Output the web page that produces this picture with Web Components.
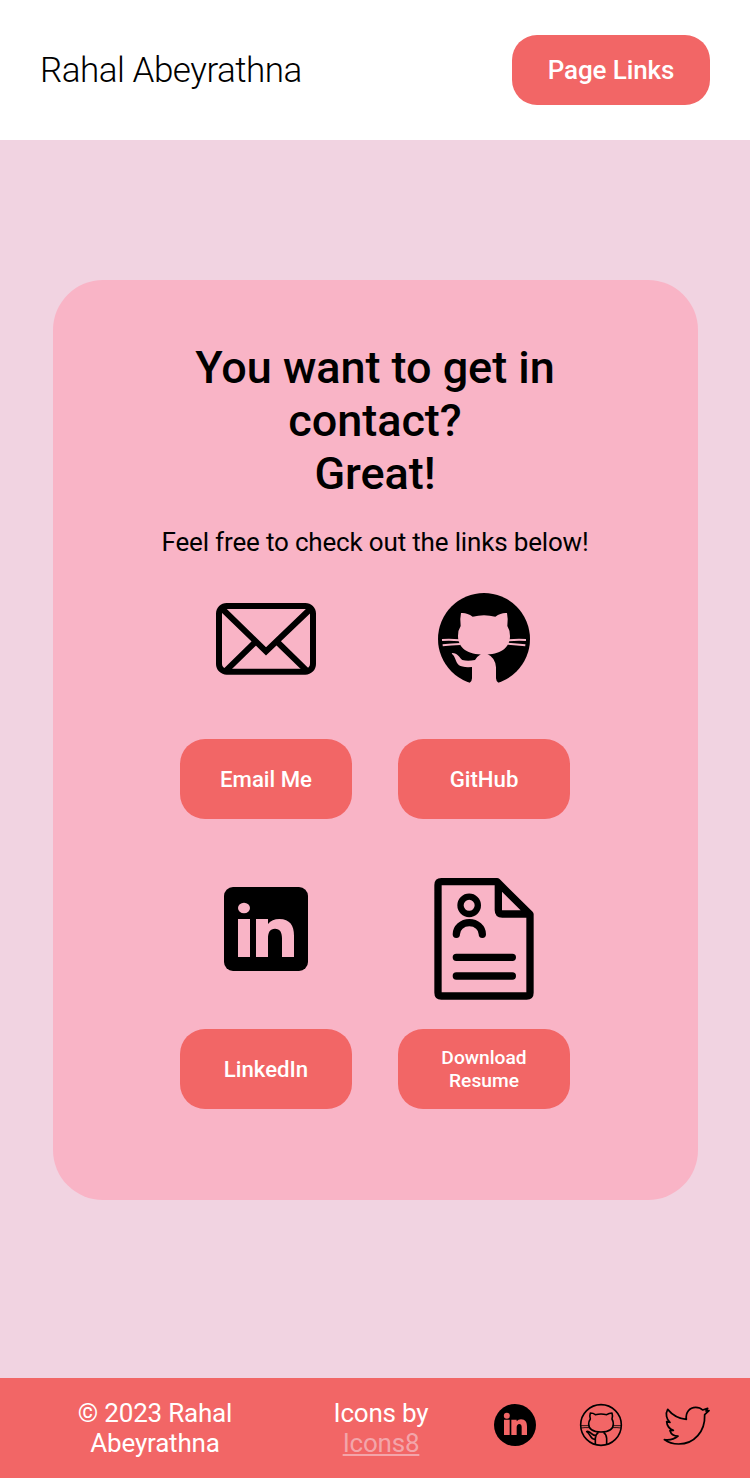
<!DOCTYPE html>
<html lang="en">
<head>
<meta charset="utf-8">
<title>Rahal Abeyrathna</title>
<style>
html,body{margin:0;padding:0}
body{font-family:Roboto,"Liberation Sans",sans-serif;color:#000;background:#f1d3e1;--coral:#f26666;--pink:#f9b4c6}
</style>
</head>
<body>
<contact-page></contact-page>
<script>
const define = (name, html) => {
  const template = document.createElement('template');
  template.innerHTML = html;
  customElements.define(name, class extends HTMLElement {
    constructor() {
      super();
      this.attachShadow({ mode: 'open' }).append(template.content.cloneNode(true));
    }
  });
};

const art = {
  mail: [100, 72, '48 69 300 216', '<g fill="none" stroke="#000" stroke-width="18"><rect x="57" y="78" width="282" height="197" rx="23"/><path d="M64 84L198 214 334 84M166 186L78 272M232 186L320 272"/></g>'],
  github: [92, 91, '39 39 276 273', '<circle cx="177" cy="177" r="138"/><g fill="var(--pink)"><path d="M108 99Q125 97 143 110Q177 101 211 110Q229 97 246 99Q250 118 247 138Q255 150 255 168C255 205 225 224 177 224C129 224 99 205 99 168Q99 150 107 138Q104 118 108 99Z"/><path d="M168 222Q158 228 150 240Q128 244 112 240C102 232 98 219 82 219C80 220 80 222 82 223C91 230 92 248 102 256Q112 263 141 261V295Q141 304 134 308V322H221V309Q213 304 213 295V262Q211 233 187 222Z"/></g><path d="M51 180Q77 178 103 181M53 196Q79 193 106 192M303 180Q277 178 251 181M301 196Q275 193 248 191" fill="none" stroke="var(--pink)" stroke-width="6"/>'],
  linkedin: [84, 84, '42 36 252 252', '<rect x="42" y="36" width="252" height="252" rx="27"/><g fill="var(--pink)"><ellipse cx="102" cy="99" rx="18" ry="15.5"/><path d="M84 132H120V246H84ZM138 132H174V147Q186 132 208 132C240 132 252 152 252 182V246H216V190C216 172 210 161 195 161C180 161 174 172 174 190V246H138Z"/></g>'],
  resume: [100, 122, '27 24 300 366', '<g fill="none" stroke="#000" stroke-width="22" stroke-linecap="round" stroke-linejoin="round"><path d="M39 45Q39 35 49 35H216L315 133V368Q315 378 305 378H49Q39 378 39 368ZM220 40V120Q220 132 232 132H311"/><path d="M94 193A39 35 0 0 1 172 193M94 262H262M94 318H262"/><circle cx="132.500" cy="106" r="26" stroke-width="19"/></g>'],
  'linkedin-round': [44, 44, '39 99 132 132', '<circle cx="105" cy="165" r="63"/><g fill="var(--coral)"><circle cx="80.500" cy="137" r="9"/><path d="M72 149H89V195H72ZM94 149H110V154Q115 148 123 148C136 148 141 157 141 170V195H125V172C125 165 122 162 118 162C113 162 110 166 110 172V195H94Z"/></g>'],
  'github-line': [44, 44, '297 99 132 132', '<g fill="none" stroke="#000" stroke-width="4.800" stroke-linejoin="round"><circle cx="363" cy="165" r="61"/><path d="M331 129Q340 129 346 134Q363 130 380 134Q387 129 396 129Q399 138 396 147Q400 154 400 162C400 179 385 186 363 186C341 186 326 179 326 162Q326 154 331 147Q328 138 331 129ZM346 223V205Q347 193 355 188M380 223V205Q379 193 371 188M346 208C331 210 333 193 320 185Q322 183 328 186C336 190 336 197 349 197"/><path d="M303 167H327M303 174Q315 172 328 173M399 167H423M398 173Q411 172 423 174" stroke-width="2.500"/></g>'],
  twitter: [48, 44, '550 99 144 132', '<path d="M554 209C570 211 585 207 595 198C582 198 574 192 571 182L581 181C569 177 562 168 561 155L571 157C560 149 557 130 564 118C578 135 597 146 620 148C617 127 630 112 648 112C657 112 664 115 669 120L684 115L679 123L688 122L675 134C677 184 644 222 597 222C581 222 566 218 554 209Z" fill="none" stroke="#000" stroke-width="5.200" stroke-linejoin="round"/>']
};
customElements.define('line-icon', class extends HTMLElement {
  connectedCallback() {
    const [w, h, box, body] = art[this.getAttribute('name')];
    const root = this.shadowRoot || this.attachShadow({ mode: 'open' });
    root.innerHTML = `<style>:host{display:block;flex:none}svg{display:block}</style><svg width="${w}" height="${h}" viewBox="${box}" aria-hidden="true">${body}</svg>`;
  }
});

define('pill-button', `<style>
:host{display:block;width:172px;height:80px;flex:none}
button{all:unset;box-sizing:border-box;width:100%;height:100%;display:flex;align-items:center;justify-content:center;text-align:center;background:var(--coral);color:#fff;border-radius:25px;font-weight:500;cursor:pointer}
</style><button><slot></slot></button>`);

define('site-header', `<style>
:host{display:flex;align-items:center;justify-content:space-between;height:140px;padding:0 40px;box-sizing:border-box;background:#fff}
.name{font-size:35px;font-weight:300;letter-spacing:-.48px;padding-top:1px}
pill-button{width:198px;height:70px;font-size:26px;letter-spacing:-.1px}
</style><div class="name">Rahal Abeyrathna</div><pill-button>Page Links</pill-button>`);

define('contact-link', `<style>
:host{display:flex;flex-direction:column;align-items:center;font-size:22.2px}
.icon{height:150px;box-sizing:border-box;padding-top:var(--drop,0)}
</style><div class="icon"><slot name="icon"></slot></div><pill-button><slot></slot></pill-button>`);

define('contact-card', `<style>
:host{display:flex;flex-direction:column;align-items:center;box-sizing:border-box;width:645px;height:920px;padding:61px 1px 0 0;background:var(--pink);border-radius:50px;text-align:center}
h1{margin:0;width:400px;font-size:45px;line-height:53px;font-weight:500;letter-spacing:-.04px}
p{margin:27px 0 0;font-size:26px;line-height:31px;letter-spacing:-.17px}
.grid{display:grid;grid-template-columns:172px 172px;column-gap:46px;row-gap:60px;margin-top:31px}
.mail{--drop:14px}.github{--drop:4px}.linkedin{--drop:8px}.resume{--drop:-1px}
.resume{font-size:19.2px;line-height:23px}
</style>
<h1>You want to get in contact?<br>Great!</h1>
<p>Feel free to check out the links below!</p>
<div class="grid">
<contact-link class="mail"><line-icon slot="icon" name="mail"></line-icon>Email Me</contact-link>
<contact-link class="github"><line-icon slot="icon" name="github"></line-icon>GitHub</contact-link>
<contact-link class="linkedin"><line-icon slot="icon" name="linkedin"></line-icon>LinkedIn</contact-link>
<contact-link class="resume" style="--drop:0px"><line-icon slot="icon" name="resume" style="margin-top:-1px"></line-icon>Download<br>Resume</contact-link>
</div>`);

define('site-footer', `<style>
:host{display:grid;grid-template-columns:230px 222px 1fr;align-items:center;height:100px;box-sizing:border-box;padding:0 39px 0 40px;background:var(--coral);color:#fff;font-size:26px;line-height:30px;text-align:center;letter-spacing:-.2px}
a{color:#f3a5aa;text-decoration:underline;font-weight:400}
.icons{display:flex;justify-content:flex-end;padding-bottom:6px}
.icons line-icon+line-icon{margin-left:42px}
.icons line-icon:last-child{margin-left:40px}
.text{font-weight:450}
</style>
<div class="text">© 2023 Rahal<br>Abeyrathna</div>
<div class="text">Icons by<br><a>Icons8</a></div>
<div class="icons"><line-icon name="linkedin-round"></line-icon><line-icon name="github-line"></line-icon><line-icon name="twitter"></line-icon></div>`);

define('contact-page', `<style>
:host{display:flex;flex-direction:column;min-height:1478px}
main{flex:1;display:flex;justify-content:center;align-items:flex-start;padding:140px 0 0 1px;box-sizing:border-box}
</style><site-header></site-header><main><contact-card></contact-card></main><site-footer></site-footer>`);
</script>
</body>
</html>
